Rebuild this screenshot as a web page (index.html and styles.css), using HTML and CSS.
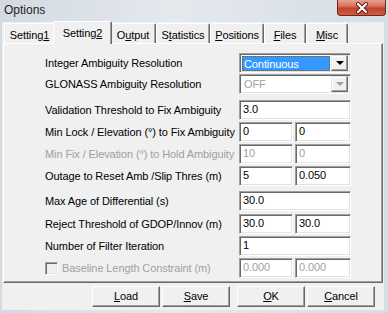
FILE: index.html
```html
<!DOCTYPE html>
<html lang="en">
<head>
    <meta charset="UTF-8">
    <title>Options</title>
    <link rel="stylesheet" href="styles.css">
</head>
<body>
    <div class="window">
        <div class="titlebar">
            <span class="title">Options</span>
            <div class="close-btn">
                <svg width="20" height="12" viewBox="0 0 20 12">
                    <path d="M6 2 L14 10 M14 2 L6 10" stroke="#5a1a10" stroke-width="4" stroke-linecap="round"/>
                    <path d="M6 2 L14 10 M14 2 L6 10" stroke="#fff" stroke-width="2.2" stroke-linecap="round"/>
                </svg>
            </div>
        </div>

        <div class="client">
            <!-- Tab strip -->
            <div class="tabs">
                <div class="tab">Setting<u>1</u></div>
                <div class="tab active">Setting<u>2</u></div>
                <div class="tab">O<u>u</u>tput</div>
                <div class="tab">S<u>t</u>atistics</div>
                <div class="tab"><u>P</u>ositions</div>
                <div class="tab"><u>F</u>iles</div>
                <div class="tab"><u>M</u>isc</div>
            </div>

            <!-- Setting2 sheet -->
            <div class="sheet">
                <div class="row">
                    <span class="label">Integer Ambiguity Resolution</span>
                    <div class="combo">
                        <span class="combo-text selected">Continuous</span>
                        <span class="combo-btn"><span class="arrow"></span></span>
                    </div>
                </div>
                <div class="row gap-1">
                    <span class="label">GLONASS Ambiguity Resolution</span>
                    <div class="combo disabled">
                        <span class="combo-text">OFF</span>
                        <span class="combo-btn"><span class="arrow"></span></span>
                    </div>
                </div>
                <div class="row gap-6">
                    <span class="label">Validation Threshold to Fix Ambiguity</span>
                    <div class="edit wide">3.0</div>
                </div>
                <div class="row">
                    <span class="label">Min Lock / Elevation (&deg;) to Fix Ambiguity</span>
                    <div class="pair">
                        <div class="edit">0</div>
                        <div class="edit">0</div>
                    </div>
                </div>
                <div class="row disabled">
                    <span class="label">Min Fix / Elevation (&deg;) to Hold Ambiguity</span>
                    <div class="pair">
                        <div class="edit">10</div>
                        <div class="edit">0</div>
                    </div>
                </div>
                <div class="row">
                    <span class="label">Outage to Reset Amb /Slip Thres (m)</span>
                    <div class="pair">
                        <div class="edit">5</div>
                        <div class="edit">0.050</div>
                    </div>
                </div>
                <div class="row gap-5">
                    <span class="label">Max Age of Differential (s)</span>
                    <div class="edit wide">30.0</div>
                </div>
                <div class="row gap-3">
                    <span class="label">Reject Threshold of GDOP/Innov (m)</span>
                    <div class="pair">
                        <div class="edit">30.0</div>
                        <div class="edit">30.0</div>
                    </div>
                </div>
                <div class="row">
                    <span class="label">Number of Filter Iteration</span>
                    <div class="edit wide">1</div>
                </div>
                <div class="row disabled">
                    <span class="label check-label"><span class="checkbox"></span>Baseline Length Constraint (m)</span>
                    <div class="pair">
                        <div class="edit">0.000</div>
                        <div class="edit">0.000</div>
                    </div>
                </div>
            </div>

            <!-- Dialog buttons -->
            <div class="buttons">
                <div class="btn"><u>L</u>oad</div>
                <div class="btn"><u>S</u>ave</div>
                <div class="btn ok"><u>O</u>K</div>
                <div class="btn"><u>C</u>ancel</div>
            </div>
        </div>
    </div>
</body>
</html>
```

FILE: styles.css
```css
body {
    margin: 0;
    font-family: 'Liberation Sans', Arial, sans-serif;
    font-size: 11px;
    letter-spacing: -0.1px;
    color: #000;
    background: #d9e0e8;
}
.window {
    width: 388px;
    height: 313px;
    display: flex;
    flex-direction: column;
    background: linear-gradient(90deg, #d3dae2 0%, #e4e9ee 45%, #d6dde5 100%);
    overflow: hidden;
}
.titlebar {
    height: 22px;
    display: flex;
    align-items: flex-start;
    justify-content: space-between;
    flex-shrink: 0;
}
.title {
    font-size: 12px;
    letter-spacing: 0;
    padding: 3px 0 0 4px;
    color: #1e1e1e;
}
.close-btn {
    width: 47px;
    height: 15px;
    margin-right: 2px;
    border: 1px solid #6e2418;
    border-top: none;
    border-radius: 0 0 4px 4px;
    background: linear-gradient(180deg, #e7a393 0%, #d9735d 40%, #c2412a 55%, #cf5f45 100%);
    display: flex;
    align-items: center;
    justify-content: center;
}
.client {
    flex: 1;
    margin: 0 4px 3px 2px;
    background: #f0f0f0;
    display: flex;
    flex-direction: column;
}

/* tab strip */
.tabs {
    height: 22px;
    display: flex;
    align-items: flex-end;
    padding-left: 2px;
    position: relative;
    z-index: 1;
    margin-bottom: -1px;
}
.tab {
    box-sizing: border-box;
    height: 20px;
    margin-bottom: 1px;
    padding-top: 5px;
    text-align: center;
    background: #f0f0f0;
    border-left: 1px solid #fff;
    border-top: 1px solid #fff;
    border-right: 1px solid #696969;
    box-shadow: inset -1px 0 #a0a0a0;
    border-radius: 2px 2px 0 0;
}
.tab:nth-child(1) { width: 51px; }
.tab:nth-child(2) { width: 55px; }
.tab:nth-child(3) { width: 46px; }
.tab:nth-child(4) { width: 54px; }
.tab:nth-child(5) { width: 54px; }
.tab:nth-child(6) { width: 42px; }
.tab:nth-child(7) { width: 42px; }
.tab.active {
    height: 23px;
    margin: 0 -2px;
    padding-top: 5px;
    position: relative;
    z-index: 2;
    width: 59px;
}

/* sheet */
.sheet {
    height: 240px;
    box-sizing: border-box;
    margin: 0 1px;
    padding: 9px 0 0 41px;
    border-left: 1px solid #fff;
    border-top: 1px solid #fff;
    border-right: 1px solid #696969;
    border-bottom: 1px solid #696969;
    box-shadow: inset -1px -1px #a0a0a0;
}
.row {
    display: flex;
    align-items: center;
    height: 20px;
    margin-top: 2px;
}
.row:first-child { margin-top: 0; }
.row.gap-1 { margin-top: 1px; }
.row.gap-3 { margin-top: 3px; }
.row.gap-5 { margin-top: 5px; }
.row.gap-6 { margin-top: 6px; }
.label {
    width: 194px;
    flex-shrink: 0;
    white-space: nowrap;
}
.row.disabled .label,
.row.disabled .edit,
.combo.disabled .combo-text {
    color: #a0a0a0;
}

/* edit boxes */
.edit, .combo {
    box-sizing: border-box;
    height: 20px;
    background: #fff;
    border: 1px solid;
    border-color: #a0a0a0 #fff #fff #a0a0a0;
    box-shadow: inset 1px 1px #696969, inset -1px -1px #e3e3e3;
}
.edit {
    width: 54px;
    padding: 2px 0 0 3px;
}
.edit.wide { width: 112px; }
.pair {
    display: flex;
    gap: 2px;
}
.pair .edit:last-child { width: 56px; }

/* combo boxes */
.combo {
    width: 112px;
    display: flex;
    align-items: center;
    padding: 0 2px;
}
.combo-text {
    flex: 1;
    height: 15px;
    line-height: 14px;
    box-sizing: border-box;
    padding-left: 2px;
    margin-right: 1px;
}
.combo-text.selected {
    background: #3399ff;
    color: #fff;
    border: 1px dotted #a05000;
    padding-left: 1px;
}
.combo-btn {
    width: 17px;
    height: 16px;
    box-sizing: border-box;
    background: #f0f0f0;
    border: 1px solid;
    border-color: #e3e3e3 #696969 #696969 #e3e3e3;
    box-shadow: inset -1px -1px #a0a0a0, inset 1px 1px #fff;
    display: flex;
    align-items: center;
    justify-content: center;
}
.arrow {
    width: 0;
    height: 0;
    border-left: 4px solid transparent;
    border-right: 4px solid transparent;
    border-top: 4px solid #000;
}
.combo.disabled .arrow { border-top-color: #a0a0a0; }

/* checkbox */
.check-label {
    display: flex;
    align-items: center;
}
.checkbox {
    width: 13px;
    height: 13px;
    box-sizing: border-box;
    margin-right: 4px;
    background: #f0f0f0;
    border: 1px solid;
    border-color: #a0a0a0 #fff #fff #a0a0a0;
    box-shadow: inset 1px 1px #696969, inset -1px -1px #e3e3e3;
}

/* dialog buttons */
.buttons {
    display: flex;
    gap: 2px;
    padding: 3px 0 0 90px;
}
.btn {
    box-sizing: border-box;
    width: 68px;
    height: 21px;
    padding-top: 3px;
    text-align: center;
    background: #f0f0f0;
    border: 1px solid;
    border-color: #fff #696969 #696969 #fff;
    box-shadow: inset -1px -1px #a0a0a0;
}
.btn.ok { margin-left: 5px; }
```
